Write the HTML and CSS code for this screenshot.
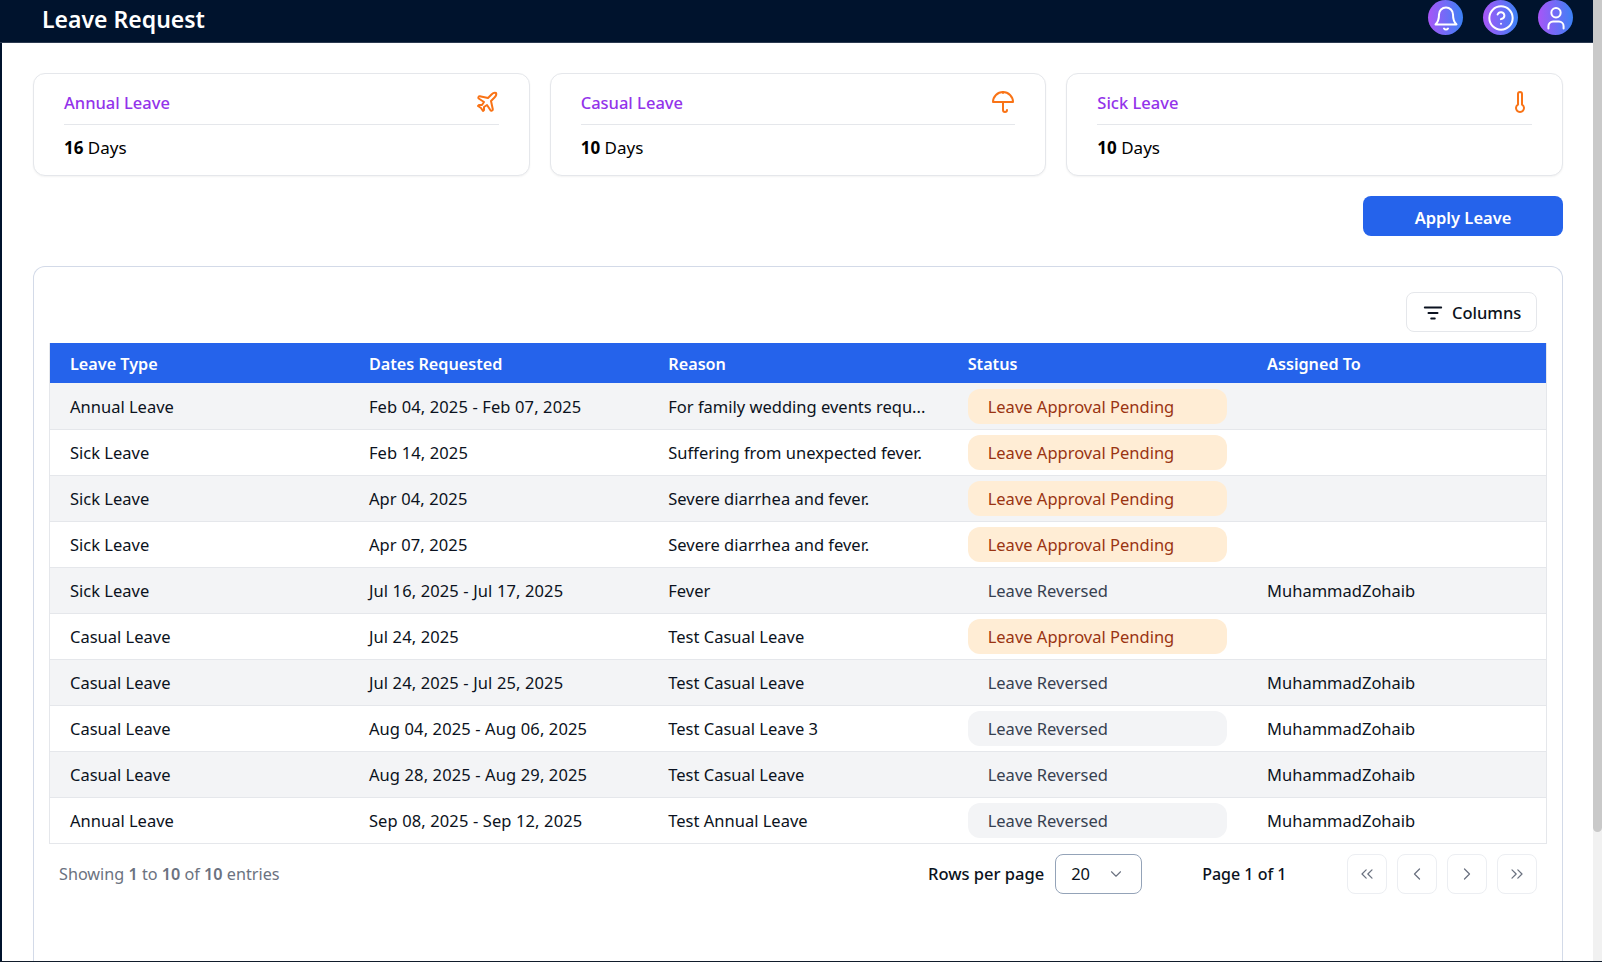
FILE: index.html
```html
<!DOCTYPE html>
<html>
<head>
  <meta charset="utf-8">
  <title>Leave Request</title>
  <link rel="stylesheet" href="styles.css">
</head>
<body>
  <div class="app">
    <div class="page">
      <header class="topbar">
        <h1>Leave Request</h1>
        <div class="topbar-icons">
          <span class="round-icon">
            <svg viewBox="0 0 24 24"><path d="M6 9a6 6 0 0 1 12 0c0 6 2.500 8 3 8.500H3c.5-.5 3-2.500 3-8.500z"/><path d="M10.300 21a2 2 0 0 0 3.400 0"/></svg>
          </span>
          <span class="round-icon">
            <svg viewBox="0 0 24 24"><circle cx="12" cy="12" r="10"/><path d="M9.100 9a3 3 0 0 1 5.800 1c0 2-3 3-3 3"/><path d="M12 17h.01"/></svg>
          </span>
          <span class="round-icon">
            <svg viewBox="0 0 24 24"><circle cx="12" cy="7.500" r="4"/><path d="M5.500 21v-2a4 4 0 0 1 4-4h5a4 4 0 0 1 4 4v2"/></svg>
          </span>
        </div>
      </header>

      <main class="content">
        <section class="cards">
          <div class="card">
            <div class="card-head">
              <span class="card-title">Annual Leave</span>
              <svg class="card-icon" viewBox="0 0 24 24"><path d="M17.800 19.200 16 11l3.500-3.500C21 6 21.500 4 21 3c-1-.5-3 0-4.500 1.500L13 8 4.800 6.200c-.5-.1-.9.1-1.100.5l-.3.5c-.2.5-.1 1 .3 1.300L9 12l-2 3H4l-1 1 3 2 2 3 1-1v-3l3-2 3.500 5.300c.3.4.8.5 1.300.3l.5-.2c.4-.3.6-.7.5-1.200z"/></svg>
            </div>
            <div class="card-days"><b>16</b> Days</div>
          </div>
          <div class="card">
            <div class="card-head">
              <span class="card-title">Casual Leave</span>
              <svg class="card-icon" viewBox="0 0 24 24"><path d="M22 12a10 10 0 0 0-20 0Z"/><path d="M12 12v8a2 2 0 0 0 4 0"/><path d="M12 2v1"/></svg>
            </div>
            <div class="card-days"><b>10</b> Days</div>
          </div>
          <div class="card">
            <div class="card-head">
              <span class="card-title">Sick Leave</span>
              <svg class="card-icon" viewBox="0 0 24 24"><path d="M14 4v10.540a4 4 0 1 1-4 0V4a2 2 0 0 1 4 0Z"/></svg>
            </div>
            <div class="card-days"><b>10</b> Days</div>
          </div>
        </section>

        <div class="actions">
          <button class="apply-btn">Apply Leave</button>
        </div>

        <section class="table-card">
          <div class="table-tools">
            <button class="columns-btn">
              <svg viewBox="0 0 24 24"><path d="M3 6h18"/><path d="M7 12h10"/><path d="M10 18h4"/></svg>
              Columns
            </button>
          </div>
          <table class="leave-table">
            <thead>
              <tr><th>Leave Type</th><th>Dates Requested</th><th>Reason</th><th>Status</th><th>Assigned To</th></tr>
            </thead>
            <tbody>
              <tr><td>Annual Leave</td><td>Feb 04, 2025 - Feb 07, 2025</td><td>For family wedding events requ...</td><td><span class="pill pending">Leave Approval Pending</span></td><td></td></tr>
              <tr><td>Sick Leave</td><td>Feb 14, 2025</td><td>Suffering from unexpected fever.</td><td><span class="pill pending">Leave Approval Pending</span></td><td></td></tr>
              <tr><td>Sick Leave</td><td>Apr 04, 2025</td><td>Severe diarrhea and fever.</td><td><span class="pill pending">Leave Approval Pending</span></td><td></td></tr>
              <tr><td>Sick Leave</td><td>Apr 07, 2025</td><td>Severe diarrhea and fever.</td><td><span class="pill pending">Leave Approval Pending</span></td><td></td></tr>
              <tr><td>Sick Leave</td><td>Jul 16, 2025 - Jul 17, 2025</td><td>Fever</td><td><span class="pill reversed">Leave Reversed</span></td><td>MuhammadZohaib</td></tr>
              <tr><td>Casual Leave</td><td>Jul 24, 2025</td><td>Test Casual Leave</td><td><span class="pill pending">Leave Approval Pending</span></td><td></td></tr>
              <tr><td>Casual Leave</td><td>Jul 24, 2025 - Jul 25, 2025</td><td>Test Casual Leave</td><td><span class="pill reversed">Leave Reversed</span></td><td>MuhammadZohaib</td></tr>
              <tr><td>Casual Leave</td><td>Aug 04, 2025 - Aug 06, 2025</td><td>Test Casual Leave 3</td><td><span class="pill reversed">Leave Reversed</span></td><td>MuhammadZohaib</td></tr>
              <tr><td>Casual Leave</td><td>Aug 28, 2025 - Aug 29, 2025</td><td>Test Casual Leave</td><td><span class="pill reversed">Leave Reversed</span></td><td>MuhammadZohaib</td></tr>
              <tr><td>Annual Leave</td><td>Sep 08, 2025 - Sep 12, 2025</td><td>Test Annual Leave</td><td><span class="pill reversed">Leave Reversed</span></td><td>MuhammadZohaib</td></tr>
            </tbody>
          </table>
          <div class="table-footer">
            <div class="entries">Showing <b>1</b> to <b>10</b> of <b>10</b> entries</div>
            <div class="rows-per-page">
              <span>Rows per page</span>
              <div class="rows-select">
                <span>20</span>
                <svg viewBox="0 0 24 24"><path d="m6 9 6 6 6-6"/></svg>
              </div>
            </div>
            <div class="page-count">Page 1 of 1</div>
            <div class="pager">
              <button><svg viewBox="0 0 24 24"><path d="m11 17-5-5 5-5"/><path d="m18 17-5-5 5-5"/></svg></button>
              <button><svg viewBox="0 0 24 24"><path d="m15 18-6-6 6-6"/></svg></button>
              <button><svg viewBox="0 0 24 24"><path d="m9 18 6-6-6-6"/></svg></button>
              <button><svg viewBox="0 0 24 24"><path d="m6 17 5-5-5-5"/><path d="m13 17 5-5-5-5"/></svg></button>
            </div>
          </div>
        </section>
      </main>
    </div>
    <div class="scrollbar"><div class="scrollbar-thumb"></div></div>
  </div>
</body>
</html>
```
FILE: styles.css
```css
* {
  box-sizing: border-box;
}
html, body {
  margin: 0;
  height: 100%;
  overflow: hidden;
}
body {
  font-family: "Noto Sans", "Open Sans", sans-serif;
  font-size: 16.500px;
  color: #0b1220;
  background: #111c2b;
}
svg {
  fill: none;
  stroke: currentColor;
  stroke-width: 2;
  stroke-linecap: round;
  stroke-linejoin: round;
}
button {
  font-family: inherit;
}

.app {
  display: flex;
  height: 961px;
}
.page {
  width: 1593px;
  display: flex;
  flex-direction: column;
  background: #00132d;
}
.scrollbar {
  width: 9px;
  background: #f1f1f1;
}
.scrollbar-thumb {
  height: 832px;
  background: #c9c9c9;
  border-radius: 0 0 5px 5px;
}

.topbar {
  height: 43px;
  flex: none;
  display: flex;
  justify-content: space-between;
  padding: 0 20px 0 42px;
  background: #00132d;
  border-bottom: 1px solid #2b3a50;
}
.topbar h1 {
  margin: 0;
  font-size: 23px;
  font-weight: 600;
  line-height: 38px;
  color: #fff;
}
.topbar-icons {
  display: flex;
  gap: 20px;
}
.round-icon {
  width: 35px;
  height: 35px;
  border-radius: 50%;
  display: flex;
  align-items: center;
  justify-content: center;
  color: #fff;
  background: linear-gradient(to right, #a855f7, #3b82f6);
}
.round-icon svg {
  width: 28px;
  height: 28px;
  stroke-width: 1.700;
}

.content {
  flex: 1;
  min-height: 0;
  margin-left: 2px;
  padding: 30px 30px 0 31px;
  background: #fff;
  display: flex;
  flex-direction: column;
}

.cards {
  display: grid;
  grid-template-columns: repeat(3, 1fr);
  gap: 20px;
}
.card {
  height: 103px;
  padding: 14px 30px 0;
  background: #fff;
  border: 1px solid #e5e7eb;
  border-radius: 12px;
  box-shadow: 0 1px 2px rgba(0, 0, 0, 0.05);
}
.card-head {
  height: 37px;
  padding-bottom: 8px;
  display: flex;
  align-items: center;
  justify-content: space-between;
  border-bottom: 1px solid #e5e7eb;
}
.card-title {
  font-weight: 500;
  color: #9333ea;
}
.card-icon {
  width: 24px;
  height: 24px;
  color: #f97316;
}
.card-days {
  margin-top: 11px;
  font-size: 17px;
  color: #000;
}
.card-days b {
  font-weight: 700;
}

.actions {
  display: flex;
  justify-content: flex-end;
  margin-top: 20px;
}
.apply-btn {
  width: 200px;
  height: 40px;
  padding: 2px 0 0;
  border: 0;
  border-radius: 8px;
  background: #2563eb;
  color: #fff;
  font-size: 16.500px;
  font-weight: 600;
}

.table-card {
  flex: 1;
  margin-top: 30px;
  padding: 25px 15px 0;
  border: 1px solid #d3dae8;
  border-bottom: 0;
  border-radius: 12px 12px 0 0;
}
.table-tools {
  display: flex;
  justify-content: flex-end;
  padding-right: 10px;
  margin-bottom: 11px;
}
.columns-btn {
  height: 40px;
  width: 131px;
  display: flex;
  align-items: center;
  gap: 8px;
  padding: 1px 0 0 15px;
  background: #fff;
  border: 1px solid #e5e7eb;
  border-radius: 8px;
  font-size: 16.500px;
  font-weight: 500;
  color: #0b1220;
}
.columns-btn svg {
  width: 22px;
  height: 22px;
}

.leave-table {
  width: 100%;
  table-layout: fixed;
  border-collapse: collapse;
  border: 1px solid #e5e7eb;
  border-top: 0;
}
.leave-table th {
  height: 40px;
  padding: 2px 20px 0;
  background: #2563eb;
  color: #fff;
  font-size: 16.200px;
  font-weight: 600;
  text-align: left;
}
.leave-table td {
  height: 46px;
  padding: 5px 20px;
  border-bottom: 1px solid #e5e7eb;
  white-space: nowrap;
}
.leave-table td:nth-child(2) {
  letter-spacing: 0.120px;
}
.leave-table tbody tr:first-child td {
  height: 46px;
  padding: 6px 20px 4px;
}
.leave-table tbody tr:nth-child(odd) {
  background: #f3f4f6;
}
.pill {
  display: block;
  height: 35px;
  line-height: 36px;
  padding-left: 20px;
  border-radius: 12px;
}
.pill.pending {
  background: #ffedd5;
  color: #9a3412;
}
.pill.reversed {
  background: #f3f4f6;
  color: #374151;
}

.table-footer {
  display: flex;
  align-items: center;
  height: 40px;
  margin-top: 10px;
  padding: 0 10px;
}
.entries {
  width: 869px;
  font-size: 16.200px;
  color: #6b7280;
}
.entries b {
  font-weight: 600;
}
.rows-per-page {
  display: flex;
  align-items: center;
  gap: 11px;
  font-weight: 500;
}
.rows-select {
  width: 87px;
  height: 40px;
  display: flex;
  align-items: center;
  justify-content: space-between;
  padding: 0 16px 0 15px;
  border: 1px solid #94a3b8;
  border-radius: 8px;
  font-weight: 400;
}
.rows-select svg {
  width: 18px;
  height: 18px;
  color: #6b7280;
  stroke-width: 1.500;
}
.page-count {
  margin-left: 60px;
  font-size: 16px;
  font-weight: 500;
}
.pager {
  display: flex;
  gap: 10px;
  margin-left: auto;
}
.pager button {
  width: 40px;
  height: 40px;
  padding: 0;
  display: flex;
  align-items: center;
  justify-content: center;
  background: #fff;
  border: 1px solid #eceef2;
  border-radius: 8px;
  color: #6b7280;
}
.pager svg {
  width: 20px;
  height: 20px;
  stroke-width: 1.500;
}
```
